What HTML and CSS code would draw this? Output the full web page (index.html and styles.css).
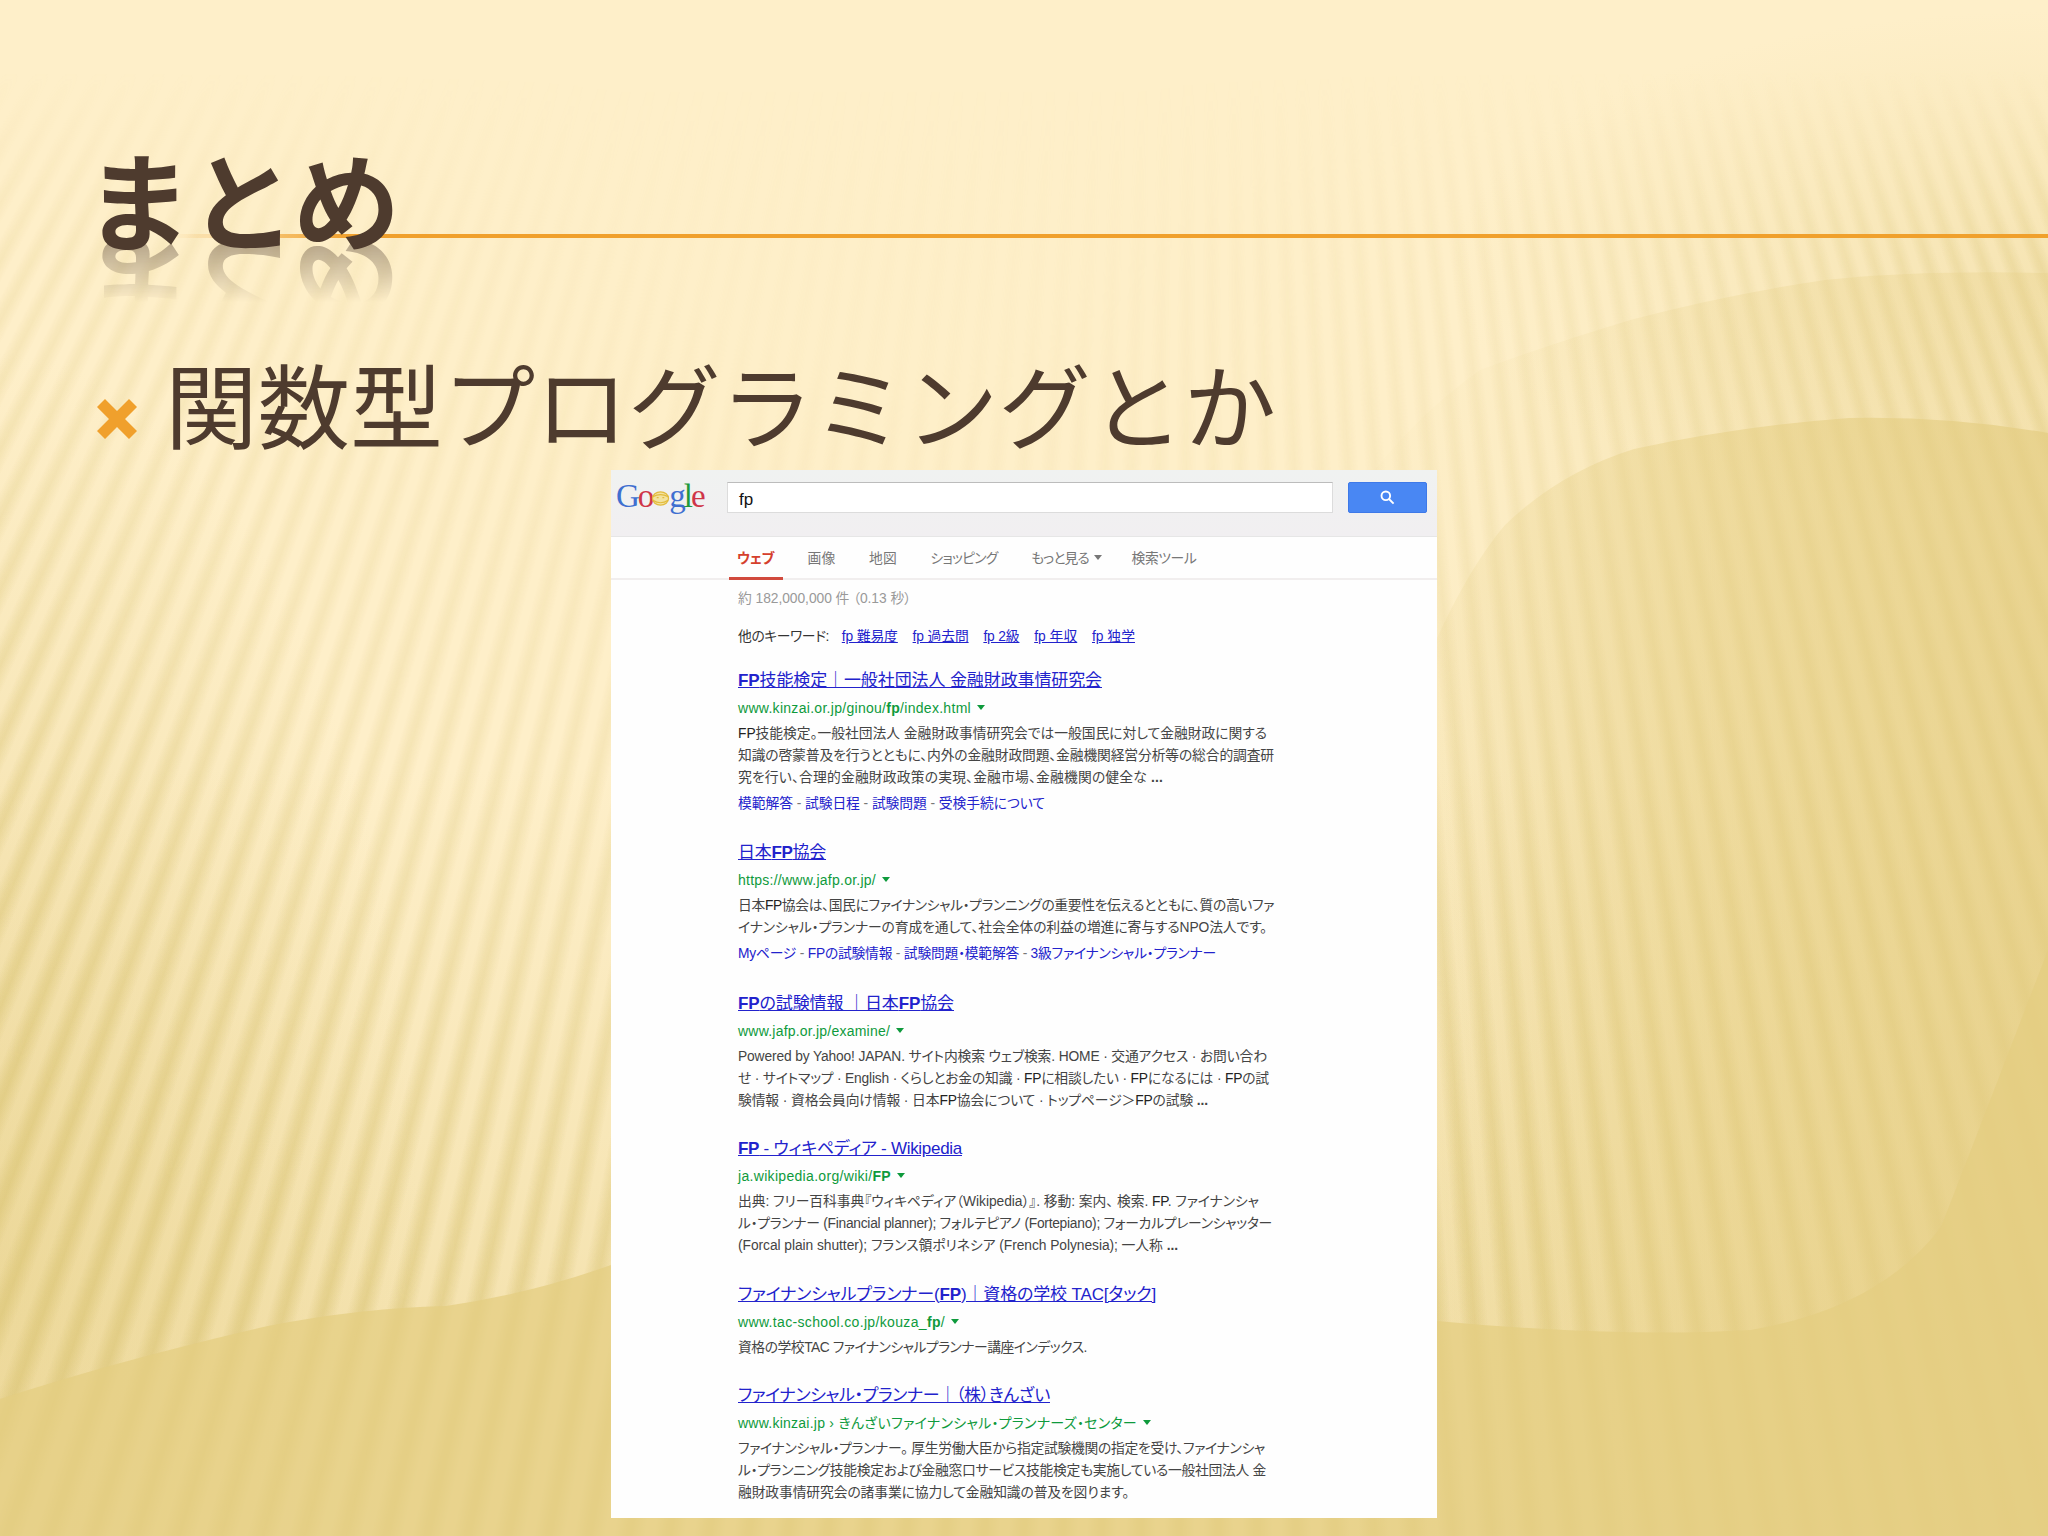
FILE: index.html
```html
<!DOCTYPE html>
<html lang="ja">
<head>
    <meta charset="UTF-8">
    <meta name="viewport" content="width=device-width, initial-scale=1.0">
    <link rel="stylesheet" href="styles.css">
    <title>まとめ</title>
</head>
<body>
    <div class="slide">
        <div class="backdrop">
            <div class="rays"></div>
            <svg class="swoosh" viewBox="0 0 2048 1536">
                <defs>
                    <linearGradient id="outer" x1="0" y1="0" x2="1" y2="0">
                        <stop offset="0" stop-color="#e4cd82" stop-opacity="0"/>
                        <stop offset="0.25" stop-color="#e4cd82" stop-opacity="0.06"/>
                        <stop offset="0.6" stop-color="#e6cf86" stop-opacity="0.26"/>
                        <stop offset="1" stop-color="#e6cf86" stop-opacity="0.32"/>
                    </linearGradient>
                    <linearGradient id="inner" x1="0" y1="0" x2="1" y2="0">
                        <stop offset="0" stop-color="#e4cd82" stop-opacity="0"/>
                        <stop offset="0.15" stop-color="#e4cd82" stop-opacity="0.14"/>
                        <stop offset="0.5" stop-color="#e6cf84" stop-opacity="0.5"/>
                        <stop offset="1" stop-color="#e4cd82" stop-opacity="0.72"/>
                    </linearGradient>
                </defs>
                <path fill="url(#outer)" d="M2048 273Q1920 270 1825 280Q1730 294 1634 319Q1550 344 1480 370Q1380 440 1300 580V1536H2048Z"/>
                <path fill="url(#inner)" d="M2048 433Q1950 416 1849 418Q1740 426 1634 449Q1560 472 1505 525Q1450 590 1400 730L1340 1536H2048Z"/>
                <path class="ground" d="M0 1399Q120 1360 268 1326Q360 1308 446 1306Q530 1294 611 1265L800 1240L1437 1321Q1620 1338 1751 1330Q1880 1308 1941 1227Q1975 1140 2048 950V1536H0Z"/>
            </svg>
        </div>

        <header class="title">
            <div class="rule"></div>
            <h1>まとめ</h1>
        </header>

        <div class="bullet">
            <svg class="cross" viewBox="0 0 42 42"><path d="M9 1L21 13L33 1L41 9L29 21L41 33L33 41L21 29L9 41L1 33L13 21L1 9Z"/></svg>
            <p>関数型プログラミングとか</p>
        </div>

        <main class="search">
            <div class="bar">
                <div class="logo">
                    <span class="b">G</span><span class="r">o</span><svg viewBox="0 0 20 18"><ellipse cx="10" cy="9" rx="8.5" ry="7"/><path d="M2 7Q10 3 18 7M2 11Q10 16 18 11M6 8h2M12 8h2"/></svg><span class="b">g</span><span class="g">l</span><span class="r">e</span>
                </div>
                <div class="box"><span data-w="14">fp</span></div>
                <div class="go">
                    <svg viewBox="0 0 16 16"><circle cx="6.2" cy="6.2" r="4.6"/><path d="M9.6 9.6L14.5 14.5"/></svg>
                </div>
            </div>
            <nav>
                <span class="tab on"><span data-w="37">ウェブ</span></span>
                <span class="tab"><span data-w="28">画像</span></span>
                <span class="tab"><span data-w="28">地図</span></span>
                <span class="tab"><span data-w="67">ショッピング</span></span>
                <span class="tab more"><span data-w="58">もっと見る</span><i class="arrow"></i></span>
                <span class="tab"><span data-w="65">検索ツール</span></span>
            </nav>
            <div class="stats"><span data-w="173">約 182,000,000 件 （0.13 秒）</span></div>
            <div class="related">
                <span class="key" data-w="91">他のキーワード:</span>
                <a data-w="56">fp 難易度</a>
                <a data-w="56">fp 過去問</a>
                <a data-w="36">fp 2級</a>
                <a data-w="43">fp 年収</a>
                <a data-w="43">fp 独学</a>
            </div>

            <div class="result">
                <h3><a data-w="364"><b>FP</b>技能検定｜一般社団法人 金融財政事情研究会</a></h3>
                <cite><span data-w="233">www.kinzai.or.jp/ginou/<b>fp</b>/index.html</span><i class="arrow"></i></cite>
                <p><span data-w="529"><em>FP</em>技能検定。一般社団法人 金融財政事情研究会では一般国民に対して金融財政に関する</span></p>
                <p><span data-w="536">知識の啓蒙普及を行うとともに、内外の金融財政問題、金融機関経営分析等の総合的調査研</span></p>
                <p><span data-w="425">究を行い、合理的金融財政政策の実現、金融市場、金融機関の健全な <b>...</b></span></p>
                <div class="links"><span data-w="307">模範解答 <s>-</s> 試験日程 <s>-</s> 試験問題 <s>-</s> 受検手続について</span></div>
            </div>

            <div class="result">
                <h3><a data-w="88">日本<b>FP</b>協会</a></h3>
                <cite><span data-w="138">https://www.jafp.or.jp/</span><i class="arrow"></i></cite>
                <p><span data-w="536">日本<em>FP</em>協会は、国民にファイナンシャル・プランニングの重要性を伝えるとともに、質の高いファ</span></p>
                <p><span data-w="529">イナンシャル・プランナーの育成を通して、社会全体の利益の増進に寄与するNPO法人です。</span></p>
                <div class="links"><span data-w="478">Myページ <s>-</s> FPの試験情報 <s>-</s> 試験問題・模範解答 <s>-</s> 3級ファイナンシャル・プランナー</span></div>
            </div>

            <div class="result">
                <h3><a data-w="216"><b>FP</b>の試験情報 ｜日本<b>FP</b>協会</a></h3>
                <cite><span data-w="152">www.jafp.or.jp/examine/</span><i class="arrow"></i></cite>
                <p><span data-w="529">Powered by Yahoo! JAPAN. サイト内検索 ウェブ検索. HOME · 交通アクセス · お問い合わ</span></p>
                <p><span data-w="531">せ · サイトマップ · English · くらしとお金の知識 · <em>FP</em>に相談したい · <em>FP</em>になるには · <em>FP</em>の試</span></p>
                <p><span data-w="470">験情報 · 資格会員向け情報 · 日本<em>FP</em>協会について · トップページ＞<em>FP</em>の試験 <b>...</b></span></p>
            </div>

            <div class="result">
                <h3><a data-w="224"><b>FP</b> - ウィキペディア - Wikipedia</a></h3>
                <cite><span data-w="153">ja.wikipedia.org/wiki/<b>FP</b></span><i class="arrow"></i></cite>
                <p><span data-w="521">出典: フリー百科事典『ウィキペディア（Wikipedia）』. 移動: 案内、 検索. <em>FP</em>. ファイナンシャ</span></p>
                <p><span data-w="534">ル・プランナー (Financial planner); フォルテピアノ (Fortepiano); フォーカルプレーンシャッター</span></p>
                <p><span data-w="440">(Forcal plain shutter); フランス領ポリネシア (French Polynesia); 一人称 <b>...</b></span></p>
            </div>

            <div class="result">
                <h3><a data-w="418">ファイナンシャルプランナー(<b>FP</b>)｜資格の学校 TAC[タック]</a></h3>
                <cite><span data-w="207">www.tac-school.co.jp/kouza_<b>fp</b>/</span><i class="arrow"></i></cite>
                <p><span data-w="349">資格の学校TAC ファイナンシャルプランナー講座インデックス.</span></p>
            </div>

            <div class="result">
                <h3><a data-w="312">ファイナンシャル・プランナー｜（株）きんざい</a></h3>
                <cite><span data-w="399">www.kinzai.jp › きんざいファイナンシャル・プランナーズ・センター</span><i class="arrow"></i></cite>
                <p><span data-w="527">ファイナンシャル・プランナー。 厚生労働大臣から指定試験機関の指定を受け、ファイナンシャ</span></p>
                <p><span data-w="528">ル・プランニング技能検定および金融窓口サービス技能検定も実施している一般社団法人 金</span></p>
                <p><span data-w="391">融財政事情研究会の諸事業に協力して金融知識の普及を図ります。</span></p>
            </div>
        </main>
    </div>

    <script>
        // Spread the letters of each line so that it fills its given width
        function fitLines() {
            var lines = document.querySelectorAll("[data-w]");
            for (var i = 0; i < lines.length; i++) {
                var line = lines[i];
                var gap = line.dataset.w - line.getBoundingClientRect().width;
                line.style.letterSpacing = (gap / line.textContent.length).toFixed(3) + "px";
            }
        }
        fitLines();
    </script>
</body>
</html>
```

FILE: styles.css
```css
* {
    box-sizing: border-box;
}

body {
    margin: 0;
    font-family: "Liberation Sans", "Noto Sans CJK JP", sans-serif;
}

h1, h3, p {
    margin: 0;
    font-weight: normal;
}

.slide {
    position: relative;
    width: 2048px;
    height: 1536px;
    overflow: hidden;
    background-color: #feefc9;
}

/* background */
.backdrop, .rays, .swoosh {
    position: absolute;
    inset: 0;
}

.backdrop {
    background:
        radial-gradient(420px 900px at 0 1250px, rgba(228, 205, 130, 0.5), rgba(228, 205, 130, 0)),
        radial-gradient(600px 260px at 2048px 270px, rgba(228, 205, 130, 0.3), rgba(228, 205, 130, 0)),
        linear-gradient(180deg, rgba(228, 205, 130, 0) 50%, rgba(228, 205, 130, 0.35) 85%);
}

.rays {
    background: repeating-conic-gradient(from 0.1deg at 1200px -1950px,
        rgba(212, 190, 105, 0) 0deg,
        rgba(212, 190, 105, 0) 0.15deg,
        rgba(212, 190, 105, 0.48) 0.38deg,
        rgba(212, 190, 105, 0.4) 0.46deg,
        rgba(212, 190, 105, 0) 0.64deg);
    -webkit-mask-image: radial-gradient(1300px 1300px at 880px 100px, rgba(0, 0, 0, 0.08) 20%, rgba(0, 0, 0, 0.5) 68%, #000 100%),
        linear-gradient(180deg, transparent 70px, rgba(0, 0, 0, 0.65) 260px, #000 800px);
    -webkit-mask-composite: source-in;
    mask-composite: intersect;
}

.swoosh {
    width: 2048px;
    height: 1536px;
}

.ground {
    fill: #e4cd82;
    fill-opacity: 0.75;
}

/* title and bullet */
.title {
    position: relative;
    height: 340px;
    padding: 127px 0 0 85px;
}

.rule {
    position: absolute;
    left: 170px;
    right: 0;
    top: 234px;
    height: 4px;
    background: linear-gradient(90deg, rgba(240, 160, 44, 0), #f0a02c 180px);
}

h1 {
    position: relative;
    width: 330px;
    height: 140px;
    font: bold 107px/140px "Noto Sans CJK JP", sans-serif;
    letter-spacing: -3px;
    color: #4e3b2e;
    white-space: nowrap;
    -webkit-box-reflect: below -46px linear-gradient(transparent 42%, rgba(0, 0, 0, 0.4) 84%);
}

.bullet {
    position: relative;
    display: flex;
    height: 130px;
    padding-left: 96px;
    color: #4e3b2e;
}

.cross {
    width: 42px;
    height: 42px;
    margin: 58px 27px 0 0;
    fill: #f0a02c;
}

.bullet p {
    margin-top: -3px;
    font: 92.6px/130px "Noto Sans CJK JP", sans-serif;
    white-space: nowrap;
}

/* search page */
.search {
    position: relative;
    width: 826px;
    height: 1048px;
    margin-left: 611px;
    background-color: #fefefe;
    font-size: 13.8px;
    font-feature-settings: "palt";
    white-space: nowrap;
}

.search span[data-w], .search a {
    display: inline-block;
    white-space: pre;
}

.bar {
    display: flex;
    height: 67px;
    padding-top: 12px;
    background: linear-gradient(#f0f2f1, #f1eff1);
    border-bottom: 1px solid #e6e6e6;
}

.logo {
    display: flex;
    width: 116px;
    height: 34px;
    padding-left: 5px;
    font: 33px/29px "Liberation Serif", serif;
    letter-spacing: -2px;
}

.logo svg {
    width: 19px;
    height: 17px;
    margin: 8px -1px 0 -1px;
    fill: #f3e3a0;
    stroke: #e2bb3c;
    stroke-width: 1.3;
}

.b { color: #3f6fd0; }
.r { color: #cf3548; }
.g { color: #1f9a3c; }

.box {
    width: 606px;
    height: 31px;
    padding-left: 11px;
    border: 1px solid #dcdcdc;
    border-top-color: #bcbcbc;
    background-color: #fff;
    font-size: 17px;
    line-height: 34px;
    color: #111;
}

.go {
    display: flex;
    justify-content: center;
    align-items: center;
    width: 79px;
    height: 31px;
    margin-left: 15px;
    border: 1px solid #3e79e8;
    border-radius: 2px;
    background-color: #4987f3;
}

.go svg {
    width: 15px;
    height: 15px;
    fill: none;
    stroke: #fff;
    stroke-width: 2;
}

nav {
    display: flex;
    gap: 15.5px;
    height: 43px;
    padding-left: 118px;
    border-bottom: 2px solid #f1eeee;
    line-height: 44px;
    color: #777;
}

.tab {
    height: 43px;
    padding: 0 9px;
}

.tab:first-child {
    padding-left: 8px;
}

.more {
    padding-right: 5px;
}

.on {
    border-bottom: 3px solid #d14a3d;
    color: #d5402c;
    font-weight: bold;
}

.arrow {
    display: inline-block;
    margin-left: 6px;
    border: 4px solid transparent;
    border-top: 5px solid currentColor;
    border-bottom: 0;
    vertical-align: 3px;
}

.more .arrow {
    margin-left: 5px;
}

.stats {
    height: 37px;
    padding-left: 127px;
    line-height: 38px;
    color: #999;
}

.related {
    display: flex;
    gap: 14.8px;
    height: 38px;
    padding-left: 127px;
    line-height: 39px;
    color: #333;
}

.related .key {
    margin-right: -2px;
}

a {
    color: #2222cc;
    text-decoration: underline;
}

.result {
    margin-bottom: 23.3px;
    padding-left: 127px;
    color: #444;
}

.related + .result {
    margin-top: 11.5px;
}

h3 {
    height: 28px;
    font-size: 17px;
    line-height: 28px;
}

cite {
    display: block;
    height: 28px;
    font-style: normal;
    font-size: 14px;
    line-height: 27.5px;
    color: #0e9a3c;
}

.result p {
    height: 22.1px;
    line-height: 22.1px;
}

em {
    font-style: normal;
    color: #222;
}

.links {
    height: 27px;
    padding-top: 3px;
    line-height: 24px;
    color: #2222cc;
}

.links s {
    text-decoration: none;
    color: #777;
}
```
